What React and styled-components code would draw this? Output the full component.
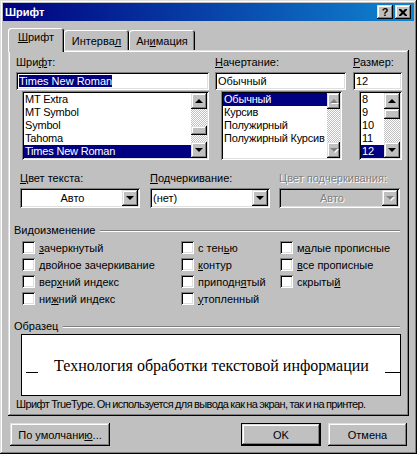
import React from 'react';
import styled, { createGlobalStyle, css } from 'styled-components';

const GlobalStyle = createGlobalStyle`
    * {
        box-sizing: border-box;
    }
    body {
        margin: 0;
        background: #c0c0c0;
        font-family: "Liberation Sans", Arial, sans-serif;
        font-size: 11px;
        color: #000;
    }
`;

const raised = css`
    background: #c0c0c0;
    box-shadow: inset -1px -1px #000, inset 1px 1px #dfdfdf,
        inset -2px -2px #808080, inset 2px 2px #fff;
`;

const sunken = css`
    box-shadow: inset 1px 1px #808080, inset -1px -1px #fff,
        inset 2px 2px #000, inset -2px -2px #dfdfdf;
`;

const disabledText = css`
    color: #808080;
    text-shadow: 1px 1px 0 #fff;
`;

const Window = styled.div`
    width: 417px;
    height: 454px;
    padding: 3px;
    background: #c0c0c0;
    box-shadow: inset -1px -1px #000, inset 1px 1px #dfdfdf,
        inset -2px -2px #808080, inset 2px 2px #fff;
`;

const TitleBar = styled.div`
    display: flex;
    align-items: center;
    height: 18px;
    padding-left: 2px;
    background: linear-gradient(90deg, #000080, #1084d0);
    color: #fff;
    font-weight: 700;
`;

const TitleText = styled.div`
    flex: 1;
`;

const TitleButtons = styled.div`
    display: flex;
    gap: 2px;
    margin-right: 3px;
`;

const TitleButton = styled.div`
    ${raised};
    display: flex;
    align-items: center;
    justify-content: center;
    width: 16px;
    height: 14px;
    color: #000;
    font-weight: 700;
    font-size: 11px;
    line-height: 14px;
`;

const Body = styled.div`
    padding: 7px 5px 0 5px;
`;

const TabStrip = styled.div`
    display: flex;
    align-items: flex-end;
    height: 22px;
`;

const Tab = styled.div`
    position: relative;
    width: ${(p) => p.$w}px;
    padding-top: 3px;
    text-align: center;
    line-height: 13px;
    background: #c0c0c0;
    border-top-left-radius: 3px;
    border-top-right-radius: 3px;
    box-shadow: inset 1px 1px #fff, inset -1px 0 #000, inset -2px 0 #808080;
    ${(p) =>
        p.$active
            ? css`
                  height: 24px;
                  margin-bottom: -2px;
                  z-index: 1;
              `
            : css`
                  height: 20px;
                  padding-top: 5px;
              `}
`;

const Panel = styled.div`
    ${raised};
    height: 366px;
    padding: 6px 6px 0 6px;
`;

const TopRow = styled.div`
    display: flex;
    margin-left: 2px;
`;

const Field = styled.div`
    display: flex;
    flex-direction: column;
    width: ${(p) => p.$w}px;
    margin-left: ${(p) => p.$ml || 0}px;
`;

const Label = styled.div`
    height: 13px;
    line-height: 13px;
    margin-bottom: 3px;
    white-space: nowrap;
    ${(p) => p.$disabled && disabledText};
`;

const TextBox = styled.div`
    ${sunken};
    height: 18px;
    padding: 2px 3px;
    background: #fff;
    line-height: 14px;
    white-space: nowrap;
    overflow: hidden;
`;

const Selection = styled.span`
    background: #000080;
    color: #fff;
`;

const ListBox = styled.div`
    ${sunken};
    display: flex;
    width: ${(p) => p.$w}px;
    height: 69px;
    margin-top: 1px;
    margin-left: ${(p) => p.$ml}px;
    padding: 2px;
    background: #fff;
`;

const Items = styled.div`
    flex: 1;
    min-width: 0;
    overflow: hidden;
`;

const Item = styled.div`
    height: 13px;
    line-height: 13px;
    padding-left: 1px;
    white-space: nowrap;
    letter-spacing: -0.2px;
    ${(p) =>
        p.$selected &&
        css`
            background: #000080;
            color: #fff;
        `}
`;

const ScrollBar = styled.div`
    display: flex;
    flex-direction: column;
    flex-shrink: 0;
    width: ${(p) => p.$w || 16}px;
`;

const Track = styled.div`
    flex: 1;
    background-color: #fff;
    background-image: conic-gradient(
        #c0c0c0 25%,
        #fff 0 50%,
        #c0c0c0 0 75%,
        #fff 0
    );
    background-size: 2px 2px;
`;

const Thumb = styled.div`
    ${raised};
    height: ${(p) => p.$h}px;
    margin-top: ${(p) => p.$top}px;
`;

const ArrowButton = styled.div`
    ${raised};
    display: flex;
    align-items: center;
    justify-content: center;
    width: ${(p) => p.$w || 16}px;
    height: 16px;
    flex-shrink: 0;
`;

const Arrow = styled.div`
    width: 0;
    height: 0;
    border-left: 4px solid transparent;
    border-right: 4px solid transparent;
    ${(p) =>
        p.$up
            ? css`
                  border-bottom: 4px solid ${p.$disabled ? '#808080' : '#000'};
              `
            : css`
                  border-top: 4px solid ${p.$disabled ? '#808080' : '#000'};
              `}
    ${(p) => p.$disabled && 'filter: drop-shadow(1px 1px 0 #fff);'}
`;

const ComboRow = styled.div`
    display: flex;
    margin-top: 12px;
    margin-left: 6px;
`;

const Combo = styled.div`
    ${sunken};
    display: flex;
    align-items: center;
    height: 20px;
    padding: 2px;
    background: ${(p) => (p.$disabled ? '#c0c0c0' : '#fff')};
`;

const ComboText = styled.div`
    flex: 1;
    padding-left: 1px;
    text-align: ${(p) => (p.$center ? 'center' : 'left')};
    line-height: 16px;
    ${(p) => p.$disabled && disabledText};
`;

const GroupHeader = styled.div`
    display: flex;
    align-items: center;
    height: 13px;
    margin-top: ${(p) => p.$mt}px;
    margin-right: 3px;
    margin-bottom: ${(p) => p.$mb}px;
    line-height: 13px;
`;

const GroupLine = styled.div`
    flex: 1;
    height: 2px;
    margin-left: 5px;
    border-top: 1px solid #808080;
    border-bottom: 1px solid #fff;
`;

const CheckGrid = styled.div`
    display: grid;
    grid-template-columns: 159px 99px 1fr;
    grid-template-rows: repeat(4, 17px);
    grid-auto-flow: column;
    margin-left: 8px;
`;

const CheckItem = styled.div`
    display: flex;
    align-items: center;
    gap: 4px;
    white-space: nowrap;
`;

const CheckBox = styled.div`
    ${sunken};
    width: 13px;
    height: 13px;
    background: #fff;
`;

const PreviewBox = styled.div`
    display: flex;
    align-items: center;
    justify-content: space-between;
    width: 380px;
    height: 62px;
    margin-top: 1px;
    margin-left: 7px;
    padding-left: 4px;
    background: #fff;
    border: 1px solid #000;
`;

const Mark = styled.div`
    width: ${(p) => p.$w}px;
    height: 1px;
    margin-top: 15px;
    background: #000;
`;

const SampleText = styled.div`
    font-family: "Liberation Serif", "Times New Roman", serif;
    font-size: 16px;
    line-height: 18px;
    margin-top: 1px;
`;

const Note = styled.div`
    margin-top: 2px;
    margin-left: 2px;
    line-height: 13px;
    letter-spacing: -0.6px;
    word-spacing: -0.5px;
    white-space: nowrap;
`;

const ButtonRow = styled.div`
    display: flex;
    margin-top: 7px;
    padding: 0 2px;
`;

const Button = styled.div`
    ${raised};
    display: flex;
    align-items: center;
    justify-content: center;
    width: ${(p) => p.$w}px;
    height: 23px;
    margin-left: ${(p) => p.$ml || 0}px;
    ${(p) =>
        p.$default &&
        css`
            border: 1px solid #000;
        `}
`;

const Spacer = styled.div`
    flex: 1;
`;

function ScrollArrows({ disabled, width, children }) {
    return (
        <ScrollBar $w={width}>
            <ArrowButton $w={width}>
                <Arrow $up $disabled={disabled} />
            </ArrowButton>
            {children}
            <ArrowButton $w={width}>
                <Arrow $disabled={disabled} />
            </ArrowButton>
        </ScrollBar>
    );
}

function DropDown({ text, center, disabled }) {
    return (
        <Combo $disabled={disabled}>
            <ComboText $center={center} $disabled={disabled}>
                {text}
            </ComboText>
            <ArrowButton>
                <Arrow $disabled={disabled} />
            </ArrowButton>
        </Combo>
    );
}

const fonts = ['MT Extra', 'MT Symbol', 'Symbol', 'Tahoma', 'Times New Roman'];
const styles = ['Обычный', 'Курсив', 'Полужирный', 'Полужирный Курсив'];
const sizes = ['8', '9', '10', '11', '12'];

const effects = [
    [<u key="u">з</u>, 'ачеркнутый'],
    [<u key="u">д</u>, 'войное зачеркивание'],
    ['вер', <u key="u">х</u>, 'ний индекс'],
    ['ни', <u key="u">ж</u>, 'ний индекс'],
    ['с тен', <u key="u">ь</u>, 'ю'],
    [<u key="u">к</u>, 'онтур'],
    ['приподн', <u key="u">я</u>, 'тый'],
    [<u key="u">у</u>, 'топленный'],
    ['м', <u key="u">а</u>, 'лые прописные'],
    [<u key="u">в</u>, 'се прописные'],
    ['скрыты', <u key="u">й</u>],
];

export default function App() {
    return (
        <>
            <GlobalStyle />
            <Window>
                <TitleBar>
                    <TitleText>Шрифт</TitleText>
                    <TitleButtons>
                        <TitleButton>?</TitleButton>
                        <TitleButton>
                            <svg width="8" height="7" viewBox="0 0 8 7">
                                <path
                                    d="M0 0h2l2 2 2-2h2v1l-2.5 2.5 2.5 2.5v1h-2l-2-2-2 2h-2v-1l2.5-2.5-2.5-2.5z"
                                    fill="#000"
                                />
                            </svg>
                        </TitleButton>
                    </TitleButtons>
                </TitleBar>
                <Body>
                    <TabStrip>
                        <Tab $active $w={56}>
                            <u>Ш</u>рифт
                        </Tab>
                        <Tab $w={65}>
                            Интерва<u>л</u>
                        </Tab>
                        <Tab $w={66}>
                            Ан<u>и</u>мация
                        </Tab>
                    </TabStrip>
                    <Panel>
                        <TopRow>
                            <Field $w={193}>
                                <Label>
                                    Шри<u>ф</u>т:
                                </Label>
                                <TextBox>
                                    <Selection>Times New Roman</Selection>
                                </TextBox>
                                <ListBox $w={187} $ml={6}>
                                    <Items>
                                        {fonts.map((f, i) => (
                                            <Item key={f} $selected={i === 4}>
                                                {f}
                                            </Item>
                                        ))}
                                    </Items>
                                    <ScrollArrows>
                                        <Track>
                                            <Thumb $h={9} $top={17} />
                                        </Track>
                                    </ScrollArrows>
                                </ListBox>
                            </Field>
                            <Field $w={131} $ml={6}>
                                <Label>
                                    <u>Н</u>ачертание:
                                </Label>
                                <TextBox>Обычный</TextBox>
                                <ListBox $w={121} $ml={6}>
                                    <Items>
                                        {styles.map((s, i) => (
                                            <Item key={s} $selected={i === 0}>
                                                {s}
                                            </Item>
                                        ))}
                                    </Items>
                                    <ScrollArrows disabled width={13}>
                                        <Track />
                                    </ScrollArrows>
                                </ListBox>
                            </Field>
                            <Field $w={49} $ml={7}>
                                <Label>
                                    <u>Р</u>азмер:
                                </Label>
                                <TextBox>12</TextBox>
                                <ListBox $w={43} $ml={6}>
                                    <Items>
                                        {sizes.map((s, i) => (
                                            <Item key={s} $selected={i === 4}>
                                                {s}
                                            </Item>
                                        ))}
                                    </Items>
                                    <ScrollArrows>
                                        <Track>
                                            <Thumb $h={10} $top={0} />
                                        </Track>
                                    </ScrollArrows>
                                </ListBox>
                            </Field>
                        </TopRow>

                        <ComboRow>
                            <Field $w={120}>
                                <Label>
                                    <u>Ц</u>вет текста:
                                </Label>
                                <DropDown text="Авто" center />
                            </Field>
                            <Field $w={120} $ml={10}>
                                <Label>
                                    <u>П</u>одчеркивание:
                                </Label>
                                <DropDown text="(нет)" />
                            </Field>
                            <Field $w={121} $ml={9}>
                                <Label $disabled>Цвет подчеркивания:</Label>
                                <DropDown text="Авто" center disabled />
                            </Field>
                        </ComboRow>

                        <GroupHeader $mt={16} $mb={2}>
                            Видоизменение
                            <GroupLine />
                        </GroupHeader>
                        <CheckGrid>
                            {effects.map((parts, i) => (
                                <CheckItem key={i}>
                                    <CheckBox />
                                    <span>{parts}</span>
                                </CheckItem>
                            ))}
                        </CheckGrid>

                        <GroupHeader $mt={13} $mb={0}>
                            Образец
                            <GroupLine />
                        </GroupHeader>
                        <PreviewBox>
                            <Mark $w={12} />
                            <SampleText>
                                Технология обработки текстовой информации
                            </SampleText>
                            <Mark $w={15} />
                        </PreviewBox>
                        <Note>
                            Шрифт TrueType. Он используется для вывода как на
                            экран, так и на принтер.
                        </Note>
                    </Panel>
                    <ButtonRow>
                        <Button $w={100}>
                            По умолчани<u>ю</u>...
                        </Button>
                        <Spacer />
                        <Button $w={80} $default>
                            OK
                        </Button>
                        <Button $w={79} $ml={7}>
                            Отмена
                        </Button>
                    </ButtonRow>
                </Body>
            </Window>
        </>
    );
}
